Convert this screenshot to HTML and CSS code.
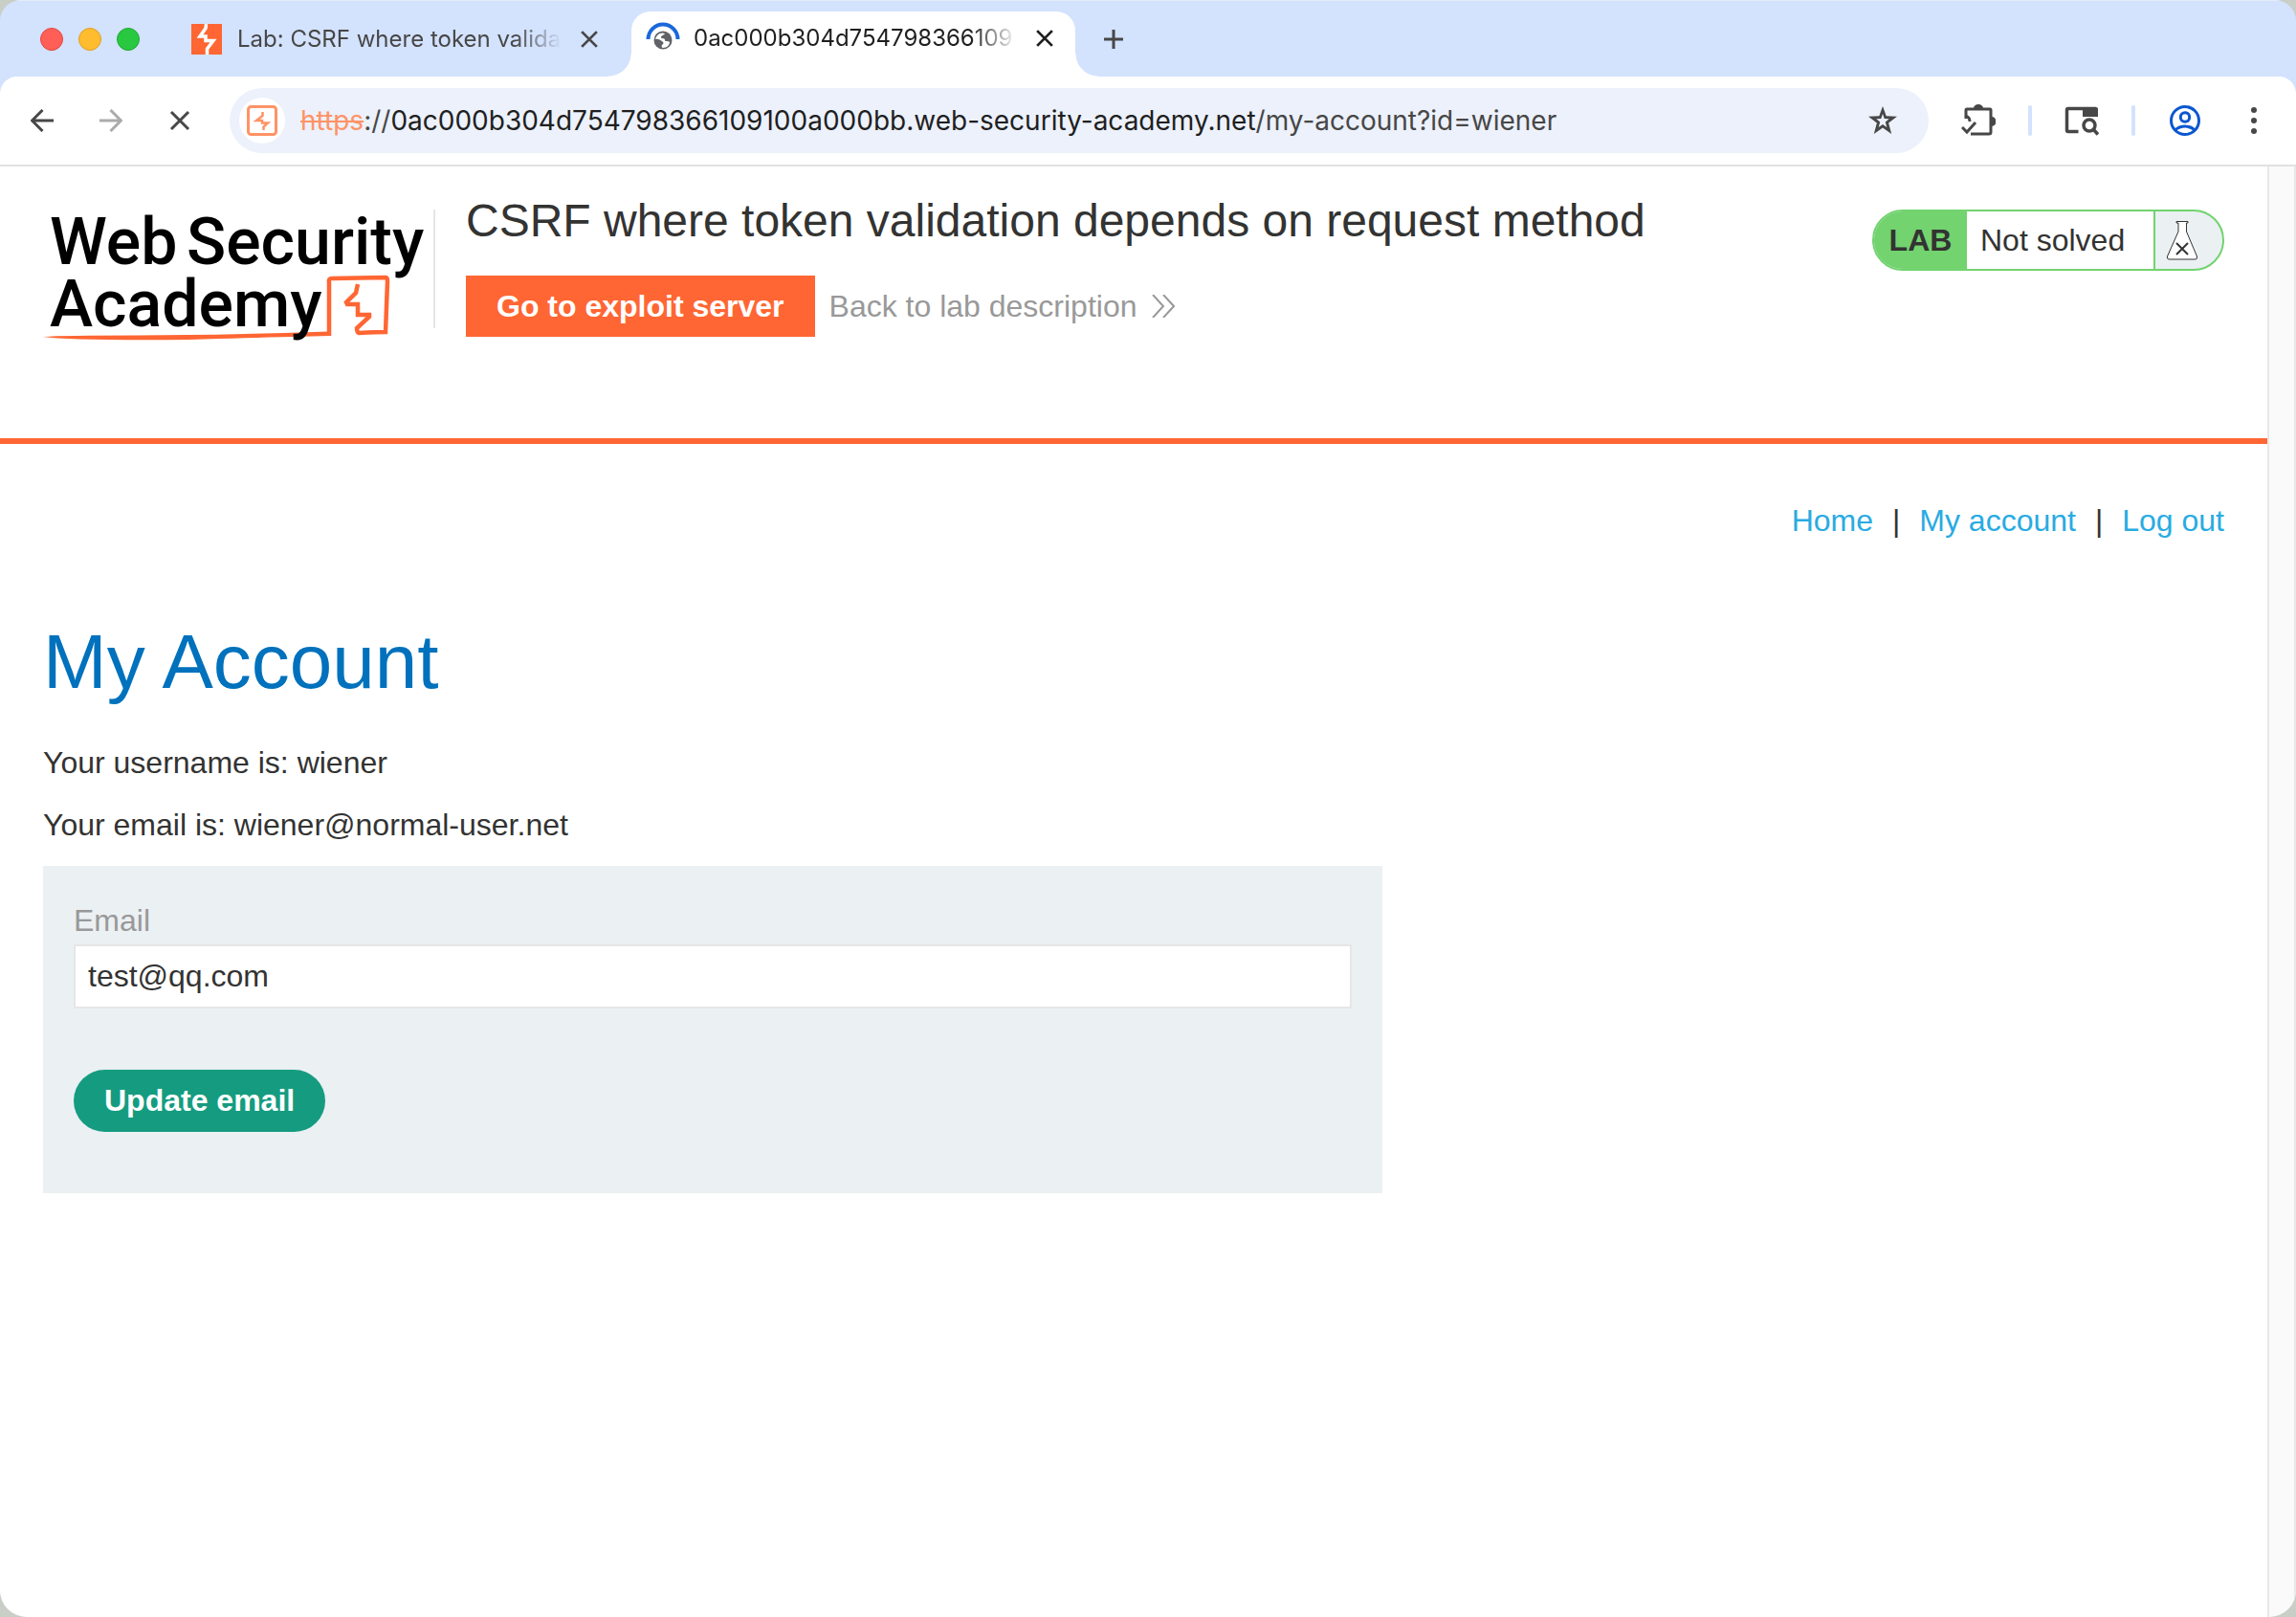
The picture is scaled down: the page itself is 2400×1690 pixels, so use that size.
FILE: index.html
```html
<!DOCTYPE html>
<html lang="en">
<head>
<meta charset="utf-8">
<title>CSRF where token validation depends on request method</title>
<link rel="stylesheet" href="styles.css">
</head>
<body>
<div class="window">
  <header class="tabstrip">
    <div class="lights">
      <span class="light light-close"></span>
      <span class="light light-min"></span>
      <span class="light light-max"></span>
    </div>
    <div class="tab">
      <svg class="favicon" viewBox="0 0 32 32" aria-hidden="true">
        <rect width="32" height="32" fill="#ff6633"/>
        <path d="M15.500 0 L15 4.500 L9 13 H15 V17.500 H23 L16.500 26 V32" fill="none" stroke="#fff" stroke-width="3.500"/>
      </svg>
      <span class="tab-title">Lab: CSRF where token valida</span>
      <button class="tab-close" aria-label="Close tab">
        <svg viewBox="0 0 16 16"><path d="M1 1 15 15M15 1 1 15"/></svg>
      </button>
    </div>
    <div class="tab tab-active">
      <svg class="favicon favicon-load" viewBox="0 0 38 38" aria-hidden="true">
        <path d="M3.500 20a15.500 15.500 0 0 1 31 0" fill="none" stroke="#1a68da" stroke-width="4"/>
        <circle cx="19" cy="21" r="9.500" fill="#5f6368"/>
        <path d="M11 20c3-1 5 1 7 2s2 3 0 4c-1 1 0 3 1 3 4 0 7-3 7-6-2-2-5 0-5-2 0-3-4-1-4-3s3-2 4-4c-5-2-9 2-10 6z" fill="#fff"/>
      </svg>
      <span class="tab-title">0ac000b304d754798366109</span>
      <button class="tab-close" aria-label="Close tab">
        <svg viewBox="0 0 16 16"><path d="M1 1 15 15M15 1 1 15"/></svg>
      </button>
    </div>
    <button class="new-tab" aria-label="New tab">
      <svg viewBox="0 0 20 20"><path d="M10 0V20M0 10H20"/></svg>
    </button>
  </header>

  <div class="toolbar">
    <div class="tools">
      <button class="tool" aria-label="Back">
        <svg viewBox="0 0 24 24"><path d="M24 12H2M12.500 1 1.500 12 12.500 23"/></svg>
      </button>
      <button class="tool tool-off" aria-label="Forward">
        <svg viewBox="0 0 24 24"><path d="M0 12H22M11.500 1 22.500 12 11.500 23"/></svg>
      </button>
      <button class="tool" aria-label="Stop loading">
        <svg viewBox="0 0 24 24"><path d="M3 3 21 21M21 3 3 21"/></svg>
      </button>
    </div>
    <div class="omnibox">
      <span class="site-chip">
        <svg viewBox="0 0 32 32" width="32" height="32" aria-hidden="true">
          <rect x="1.500" y="1.500" width="29" height="29" rx="3" fill="none" stroke="#ff9366" stroke-width="3"/>
          <path d="M16.500 7V11L10 16H16V18.500H22L17.500 22.500V26" fill="none" stroke="#ff9366" stroke-width="2.500"/>
        </svg>
      </span>
      <div class="url" role="textbox" aria-label="Address"><span class="url-scheme">https</span>://<span class="url-host">0ac000b304d754798366109100a000bb.web-security-academy.net</span>/my-account?id=wiener</div>
      <button class="star" aria-label="Bookmark this tab">
        <svg viewBox="0 0 32 32"><path fill-rule="evenodd" d="M16 1 19.700 11.200 31 11.700 22.100 18.600 25.200 30 16 23.600 6.800 30 9.900 18.600 1 11.700 12.300 11.200ZM16 9 14.300 13.900 9.300 14.200 13.200 17.400 11.700 23 16 20 20.300 23 18.800 17.400 22.700 14.200 17.700 13.900Z"/></svg>
      </button>
    </div>
    <button class="ext" aria-label="Extensions">
      <svg viewBox="0 0 36 34" width="36" height="34">
        <path d="M5 15V6Q5 5 6 5H30Q31 5 31 6V29Q31 31 29 31H10" fill="none" stroke="#474747" stroke-width="3"/>
        <path d="M13 4a5 4 0 0 1 10 0zM32 13a4.500 5 0 0 1 0 10z" fill="#474747"/>
        <path d="M4 12Q9 13 9 18" fill="none" stroke="#474747" stroke-width="3"/>
        <path d="M1 24 6 29 15 19" fill="none" stroke="#474747" stroke-width="3"/>
      </svg>
    </button>
    <span class="divider"></span>
    <button class="lens" aria-label="Search in side panel">
      <svg viewBox="0 0 36 32" width="36" height="32">
        <path d="M14.500 27.500H4Q2.500 27.500 2.500 26V5Q2.500 3.500 4 3.500H33" fill="none" stroke="#474747" stroke-width="3.500"/>
        <path d="M19 2H33Q35 2 35 4V12H19z" fill="#474747"/>
        <circle cx="26" cy="21" r="6" fill="none" stroke="#474747" stroke-width="3.500"/>
        <path d="M30 25 35 30.500" stroke="#474747" stroke-width="3.500"/>
      </svg>
    </button>
    <span class="divider"></span>
    <button class="profile" aria-label="Profile">
      <svg viewBox="0 0 32 32" width="32" height="32" fill="none" stroke="#0b57d0" stroke-width="3">
        <circle cx="16" cy="16" r="14.500"/><circle cx="16" cy="12.500" r="4.700"/><path d="M5.500 26Q10 22 16 22T26.500 26"/>
      </svg>
    </button>
    <button class="menu" aria-label="Menu">
      <svg viewBox="0 0 8 28" width="8" height="28" fill="#474747"><circle cx="4" cy="3" r="3"/><circle cx="4" cy="14" r="3"/><circle cx="4" cy="25" r="3"/></svg>
    </button>
  </div>

  <div class="viewport">
    <div class="page">
      <header class="lab-header">
        <a class="logo" href="#" aria-label="Web Security Academy">
          <svg viewBox="0 0 400 150" width="400" height="150">
            <path d="M0 133Q20 131.500 100 131.500T299 127.500V132Q250 133 152 136 30 137 0 133Z" fill="#ff6633"/>
            <path d="M299 132 299 76Q298 72 302 72L358 71Q360 71 360 75L358 128Q350 128 330 129 328 128 328 124L341 112 341 110H329V99H318L317 97 327 87 329 78" fill="none" stroke="#ff6633" stroke-width="4.500"/>
            <g class="logo-text">
              <text x="7" y="57">Web</text><text x="150" y="57">Security</text>
              <text x="7" y="122">Academy</text>
            </g>
          </svg>
        </a>
        <div class="lab-title">
          <h2>CSRF where token validation depends on request method</h2>
          <div class="lab-links">
            <a class="exploit" href="#">Go to exploit server</a>
            <a class="back" href="#">Back to lab description
              <svg viewBox="0 0 24 24" width="24" height="24" aria-hidden="true"><path d="M1 0 12 12 1 24M12 0 23 12 12 24"/></svg>
            </a>
          </div>
        </div>
        <div class="status">
          <span class="status-tag">LAB</span>
          <p class="status-text">Not solved</p>
          <span class="status-icon">
            <svg viewBox="0 0 34 42" width="34" height="42" fill="#fff" stroke="#333332" stroke-width="1">
              <path d="M11 1.500H23V3H21.500V12L32.500 38Q33 41 31 41H3Q1 41 1.500 38L13 12V3H11Z"/>
              <path d="M11 24 23 36M23 24 11 36" stroke-width="2"/>
            </svg>
          </span>
        </div>
      </header>
      <main class="account">
        <nav class="links">
          <a href="#">Home</a><span>|</span><a href="#">My account</a><span>|</span><a href="#">Log out</a>
        </nav>
        <h1>My Account</h1>
        <p>Your username is: wiener</p>
        <p>Your email is: wiener@normal-user.net</p>
        <form class="email-form">
          <label for="email">Email</label>
          <input id="email" type="email" value="test@qq.com">
          <button type="button">Update email</button>
        </form>
      </main>
    </div>
    <div class="scrollbar"></div>
  </div>
</div>
</body>
</html>
```
FILE: styles.css
```css
* { box-sizing: border-box; }
html, body { height: 100%; }
body {
  margin: 0;
  background: #c9cfc6;
  color: #333332;
  font-family: "Liberation Sans", Arial, sans-serif;
  font-size: 32px;
  line-height: 40px;
}
button { padding: 0; border: 0; background: none; font: inherit; }
svg { display: block; flex: none; }
a { text-decoration: none; }

.window {
  display: flex;
  flex-direction: column;
  min-height: 100%;
  overflow: hidden;
  border-radius: 22px 22px 28px 28px;
  background: #d3e2fd;
}

/* Tab strip */
.tabstrip {
  display: flex;
  height: 80px;
  border-top: 1px solid #e4ecfb;
  font-family: Inter, Roboto, sans-serif;
  font-size: 24px;
}
.lights { display: flex; align-items: center; gap: 16px; padding-left: 42px; width: 178px; }
.light { width: 24px; height: 24px; border: 1px solid; border-radius: 50%; }
.light-close { background: #ff5f57; border-color: #e2463f; }
.light-min { background: #febc2e; border-color: #e0a028; }
.light-max { background: #28c840; border-color: #1fa932; }
.tab { display: flex; align-items: center; width: 482px; padding: 0 35px 0 22px; color: #474747; }
.favicon { width: 32px; height: 32px; margin-right: 16px; }
.tab-title {
  flex: 1;
  white-space: nowrap;
  -webkit-mask-image: linear-gradient(to right, #000 calc(100% - 48px), transparent);
  mask-image: linear-gradient(to right, #000 calc(100% - 48px), transparent);
}
.tab-close { margin-left: 20px; color: inherit; }
.tab-close svg { width: 18px; height: 18px; fill: none; stroke: currentColor; stroke-width: 2.5; }
.tab-active {
  position: relative;
  width: 464px;
  margin-top: 11px;
  padding: 0 23px 12px 14px;
  border-radius: 20px 20px 0 0;
  background: #fff;
  color: #1f1f1f;
}
.tab-active::before, .tab-active::after {
  content: "";
  position: absolute;
  bottom: 0;
  width: 24px;
  height: 24px;
}
.tab-active::before { right: 100%; background: radial-gradient(circle at 0 0, transparent 23px, #fff 24px); }
.tab-active::after { left: 100%; background: radial-gradient(circle at 100% 0, transparent 23px, #fff 24px); }
.favicon-load { width: 38px; height: 38px; margin-right: 13px; }
.new-tab { width: 80px; }
.new-tab svg { width: 20px; height: 20px; margin: 0 auto; stroke: #474747; stroke-width: 3; }

/* Toolbar */
.toolbar {
  display: flex;
  align-items: center;
  height: 94px;
  padding: 0 40px 0 32px;
  border-bottom: 2px solid #e1e1e1;
  border-radius: 18px 18px 0 0;
  background: #fff;
}
.tools { display: flex; gap: 48px; margin-right: 40px; }
.tool svg { width: 24px; height: 24px; fill: none; stroke: #474747; stroke-width: 3; }
.tool-off svg { stroke: #ababab; }
.omnibox {
  display: flex;
  flex: 1;
  align-items: center;
  height: 68px;
  margin-right: 34px;
  padding: 0 32px 0 10px;
  border-radius: 34px;
  background: #ecf1fb;
}
.site-chip { display: flex; align-items: center; justify-content: center; width: 48px; height: 48px; border-radius: 50%; background: #fff; }
.url {
  flex: 1;
  margin-left: 16px;
  color: #474747;
  font-family: Inter, Roboto, sans-serif;
  font-size: 28px;
  white-space: nowrap;
}
.url-scheme { color: #ff9366; text-decoration: line-through; }
.url-host { color: #1f1f1f; }
.star svg { width: 32px; height: 32px; fill: #474747; }
.divider { width: 4px; height: 32px; margin: 0 34px; border-radius: 2px; background: #d3e2fd; }
.profile { margin-left: 2px; }
.menu { margin-left: 52px; }

/* Page */
.viewport { display: flex; flex: 1; }
.page { flex: 1; background: #fff; }
.scrollbar { width: 30px; border: 2px solid #e8e8e8; border-width: 0 2px; background: #fafafa; }
.lab-header {
  display: flex;
  align-items: flex-start;
  height: 290px;
  padding: 45px 45px 0;
  border-bottom: 6px solid #ff6633;
}
.logo { width: 410px; height: 124px; border-right: 2px solid #e6e6e6; }
.logo-text { font-family: Roboto, "Liberation Sans", sans-serif; font-size: 68px; font-weight: 500; fill: #000; }
.lab-title { flex: 1; margin: -16px 0 0 32px; }
.lab-title h2 { margin: 0; font-size: 48px; font-weight: 400; line-height: 56px; }
.lab-links { display: flex; align-items: center; gap: 15px; margin-top: 29px; }
.exploit { padding: 0 32px; background: #ff6633; color: #fff; font-weight: 700; line-height: 64px; }
.back { display: flex; align-items: center; gap: 16px; color: #999; }
.back svg { fill: none; stroke: #999; stroke-width: 2; }
.status { display: flex; height: 64px; border: 2px solid #72d36f; border-radius: 32px; overflow: hidden; background: #ebf0f3; line-height: 60px; }
.status-tag { width: 97px; background: #72d36f; font-weight: 700; text-align: center; }
.status-text { width: 197px; margin: 0; padding-left: 14px; border-right: 2px solid #72d36f; background: #fff; }
.status-icon { display: flex; align-items: center; width: 70px; padding-left: 11px; }

.account { padding: 60px 45px 0; }
.links { display: flex; justify-content: flex-end; gap: 20px; }
.links a { color: #29abe2; }
.account h1 { margin: 80px 0 37px; color: #0071bc; font-size: 80px; font-weight: 400; line-height: 96px; }
.account p { margin: 0 0 25px; }
.email-form { display: flex; flex-direction: column; width: 1400px; max-width: 100%; margin-top: -2px; padding: 37px 32px 64px; background: #ebf0f3; }
.email-form label { color: #999; }
.email-form input { height: 67px; margin: 5px 0 64px; padding: 0 13px; border: 2px solid #e6e6e6; border-radius: 0; background: #fff; color: inherit; font: inherit; }
.email-form button { align-self: flex-start; height: 65px; padding: 0 32px 2px; border-radius: 33px; background: #159c80; color: #fff; font-weight: 700; }
```
